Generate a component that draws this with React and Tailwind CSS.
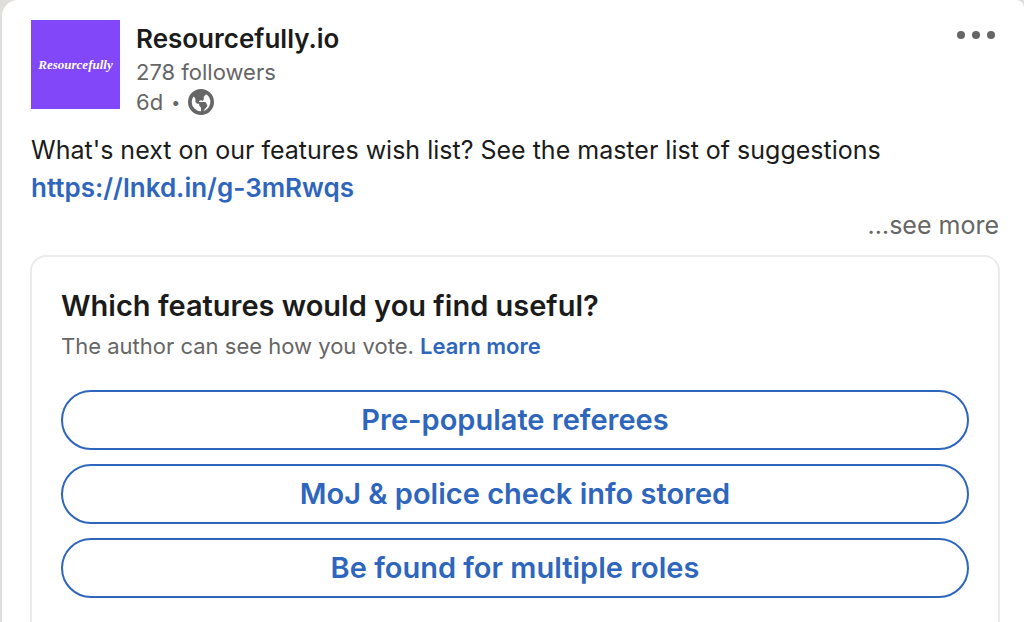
function Globe() {
  return (
    <svg viewBox="1 1 14 14" className="size-[26px]" fill="#666" role="img" aria-label="Public">
      <path d="M8 1a7 7 0 107 7 7 7 0 00-7-7zM3 8a5 5 0 011-3l.55.55A1.5 1.5 0 015 6.62v1.07a.75.75 0 00.22.53l.56.56a.75.75 0 00.53.22H7v.69a.75.75 0 00.22.53l.56.56a.75.75 0 01.22.53V13a5 5 0 01-5-5zm6.24 4.83l2-2.46a.75.75 0 00.09-.8l-.58-1.16A.76.76 0 0010 8H7v-.19a.51.51 0 01.28-.45l.38-.19a.74.74 0 01.68 0L9 7.5l.38-.7a1 1 0 00.12-.48v-.85a.78.78 0 01.21-.53l1.07-1.09a5 5 0 01-1.54 9z" />
    </svg>
  );
}

const options = ["Pre-populate referees", "MoJ & police check info stored", "Be found for multiple roles"];

export default function App() {
  return (
    <div className="flex min-h-screen flex-col bg-[#e0dfdb] pl-[2px] font-['Inter',sans-serif] text-[#1b1b1b]">
      <article className="flex flex-1 flex-col rounded-tl-2xl rounded-tr-lg bg-white pt-5 pr-6 pl-7">
        <div className="px-px">
          <header className="flex items-start">
            <div className="flex size-[89px] shrink-0 items-center justify-center bg-[#8147f9] text-white">
              <span className="font-['Liberation_Serif',serif] text-[13px] font-bold italic">Resourcefully</span>
            </div>
            <div className="ml-4 flex-1">
              <h1 className="pt-px text-[26px] leading-9 font-semibold">Resourcefully.io</h1>
              <p className="text-[22px] leading-[30px] text-[#666]">278 followers</p>
              <p className="flex items-center gap-2 text-[22px] leading-[30px] text-[#666]">
                6d <span className="text-base">•</span> <Globe />
              </p>
            </div>
            <button type="button" aria-label="More options" className="pt-[11px] pr-1">
              <svg viewBox="0 0 38 8" className="h-2 w-[38px]" fill="#666">
                <circle cx="4" cy="4" r="4" />
                <circle cx="19" cy="4" r="4" />
                <circle cx="34" cy="4" r="4" />
              </svg>
            </button>
          </header>
          <p className="mt-[15px] text-[25px] leading-[37px]">
            What's next on our features wish list? See the master list of suggestions
            <br />
            <a href="#link" className="text-[26px] font-semibold text-[#2f66bd]">https://lnkd.in/g-3mRwqs</a>
          </p>
          <div className="flex justify-end">
            <button type="button" className="text-[25px] leading-[37px] text-[#666]">…see more</button>
          </div>
        </div>
        <section className="mt-[11px] flex-1 rounded-t-2xl border-2 border-b-0 border-[#ebebeb] px-[29px] pt-[29px] pb-6">
          <h2 className="text-[29px] leading-10 font-semibold">Which features would you find useful?</h2>
          <p className="text-[22px] leading-10 text-[#666]">
            The author can see how you vote. <a href="#more" className="font-semibold text-[#2f66bd]">Learn more</a>
          </p>
          <div className="mt-6 flex flex-col gap-[14px]">
            {options.map((option) => (
              <button type="button" key={option} className="h-[60px] rounded-full border-2 border-[#2f66bd] text-[29px] font-semibold text-[#2f66bd]">
                {option}
              </button>
            ))}
          </div>
        </section>
      </article>
    </div>
  );
}
